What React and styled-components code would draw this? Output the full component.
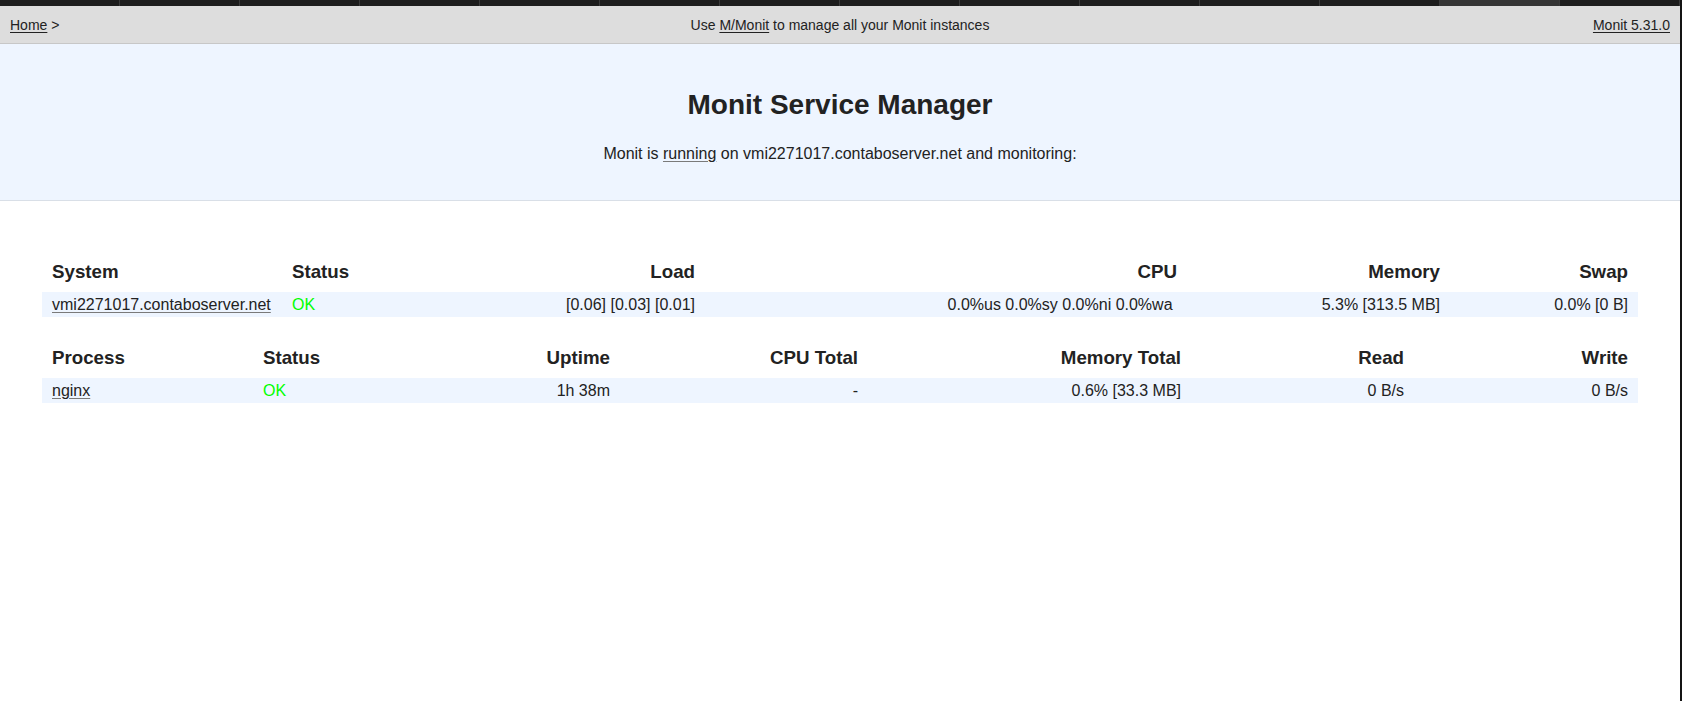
import React from "react";
import styled, { createGlobalStyle } from "styled-components";

const GlobalStyle = createGlobalStyle`
  html, body {
    margin: 0;
    padding: 0;
    background: #ffffff;
  }
  body {
    font-family: "Liberation Sans", Arial, Helvetica, sans-serif;
    color: #222222;
  }
`;

const Page = styled.div`
  min-height: 100vh;
  border-right: 2px solid #141414;
  box-sizing: border-box;
`;

// the browser tab strip that peeks in at the top
const TabStrip = styled.div`
  display: flex;
  height: 6px;
  background: #1d1d1d;
  overflow: hidden;
`;

const Tab = styled.div`
  flex: 0 0 120px;
  box-sizing: border-box;
  border-right: 1px solid #3b3b3b;
  background: ${p => (p.active ? "#353535" : "transparent")};
`;

const NavBar = styled.div`
  display: grid;
  grid-template-columns: 1fr auto 1fr;
  align-items: center;
  height: 37px;
  padding: 0 10px;
  background: #dddddd;
  border-bottom: 1px solid #c7c7c7;
  font-size: 14px;
  color: #222222;
`;

const NavItem = styled.div`
  text-align: ${p => p.align || "left"};
  white-space: nowrap;
`;

const Link = styled.a`
  color: inherit;
  text-decoration: underline;
  text-decoration-color: ${p => (p.soft ? "#7a7a7a" : "currentColor")};
  text-underline-offset: 2px;
  cursor: pointer;
`;

const Hero = styled.div`
  display: flex;
  flex-direction: column;
  align-items: center;
  padding: 44px 0 36px;
  background: #eef5ff;
  border-bottom: 1px solid #d9dfe7;
`;

const Title = styled.h1`
  margin: 0;
  font-size: 28px;
  line-height: 34px;
  font-weight: 700;
  color: #222222;
`;

const Subtitle = styled.p`
  margin: 22px 0 0;
  font-size: 16px;
  line-height: 20px;
`;

const Content = styled.div`
  display: flex;
  flex-direction: column;
  gap: 26px;
  padding-top: 56px;
`;

const Table = styled.table`
  width: 95%;
  margin: 0 auto;
  border-collapse: collapse;
  table-layout: fixed;
`;

const HeadCell = styled.th`
  padding: 4px 10px 9px;
  font-size: 18.72px;
  line-height: 22px;
  font-weight: 700;
  text-align: ${p => (p.right ? "right" : "left")};
  white-space: nowrap;
`;

const Row = styled.tr`
  background: #eef5ff;
`;

const Cell = styled.td`
  padding: 3px 10px;
  font-size: 16px;
  line-height: 19px;
  text-align: ${p => (p.right ? "right" : "left")};
  white-space: pre;
`;

const Status = styled.span`
  color: ${p => (p.ok ? "#00ff00" : "#ff0000")};
`;

const systemCols = [240, 150, 273, 482, 263, 188];
const processCols = [211, 150, 217, 248, 323, 223, 224];

const Cols = ({ widths }) => (
  <colgroup>
    {widths.map((w, i) => (
      <col key={i} style={{ width: w }} />
    ))}
  </colgroup>
);

const tabs = [0, 1, 2, 3, 4, 5, 6, 7, 8, 9, 10, 11, 12, 13];

export default function App() {
  return (
    <Page>
      <GlobalStyle />
      <TabStrip>
        {tabs.map(t => (
          <Tab key={t} active={t === 12} />
        ))}
      </TabStrip>

      <NavBar>
        <NavItem>
          <Link>Home</Link> &gt;
        </NavItem>
        <NavItem align="center">
          Use <Link>M/Monit</Link> to manage all your Monit instances
        </NavItem>
        <NavItem align="right">
          <Link>Monit 5.31.0</Link>
        </NavItem>
      </NavBar>

      <Hero>
        <Title>Monit Service Manager</Title>
        <Subtitle>
          Monit is <Link soft>running</Link> on vmi2271017.contaboserver.net and
          monitoring:
        </Subtitle>
      </Hero>

      <Content>
        <Table>
          <Cols widths={systemCols} />
          <thead>
            <tr>
              <HeadCell>System</HeadCell>
              <HeadCell>Status</HeadCell>
              <HeadCell right>Load</HeadCell>
              <HeadCell right>CPU</HeadCell>
              <HeadCell right>Memory</HeadCell>
              <HeadCell right>Swap</HeadCell>
            </tr>
          </thead>
          <tbody>
            <Row>
              <Cell>
                <Link soft>vmi2271017.contaboserver.net</Link>
              </Cell>
              <Cell>
                <Status ok>OK</Status>
              </Cell>
              <Cell right>[0.06] [0.03] [0.01]</Cell>
              <Cell right>0.0%us 0.0%sy 0.0%ni 0.0%wa </Cell>
              <Cell right>5.3% [313.5 MB]</Cell>
              <Cell right>0.0% [0 B]</Cell>
            </Row>
          </tbody>
        </Table>

        <Table>
          <Cols widths={processCols} />
          <thead>
            <tr>
              <HeadCell>Process</HeadCell>
              <HeadCell>Status</HeadCell>
              <HeadCell right>Uptime</HeadCell>
              <HeadCell right>CPU Total</HeadCell>
              <HeadCell right>Memory Total</HeadCell>
              <HeadCell right>Read</HeadCell>
              <HeadCell right>Write</HeadCell>
            </tr>
          </thead>
          <tbody>
            <Row>
              <Cell>
                <Link soft>nginx</Link>
              </Cell>
              <Cell>
                <Status ok>OK</Status>
              </Cell>
              <Cell right>1h 38m</Cell>
              <Cell right>-</Cell>
              <Cell right>0.6% [33.3 MB]</Cell>
              <Cell right>0 B/s</Cell>
              <Cell right>0 B/s</Cell>
            </Row>
          </tbody>
        </Table>
      </Content>
    </Page>
  );
}
